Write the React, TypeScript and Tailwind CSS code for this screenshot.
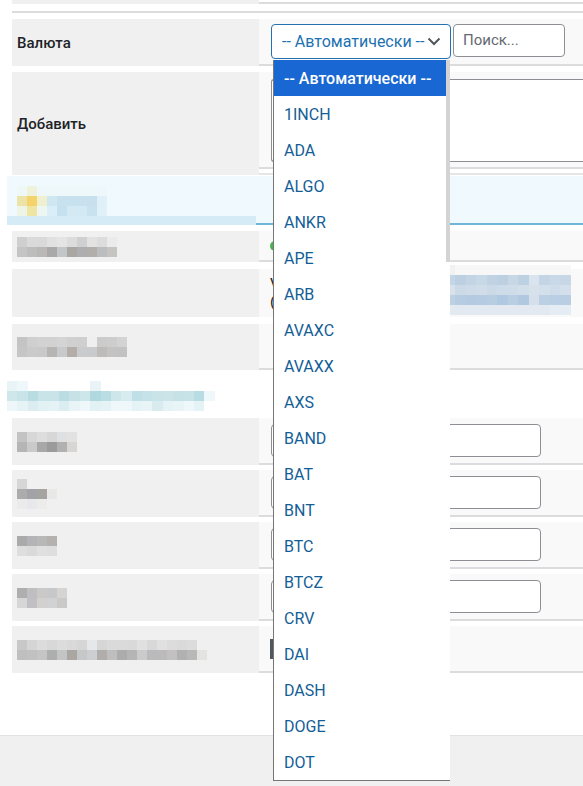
import React from "react";

const font = { fontFamily: "Roboto, 'Noto Sans', sans-serif" };

const coins = [
	"1INCH", "ADA", "ALGO", "ANKR", "APE", "ARB", "AVAXC", "AVAXX", "AXS", "BAND",
	"BAT", "BNT", "BTC", "BTCZ", "CRV", "DAI", "DASH", "DOGE", "DOT",
];

// pixelated (blurred) content, 10px cells
function Mosaic({ rows, cell = 10 }: { rows: string[][]; cell?: number }) {
	return (
		<div className="flex flex-col">
			{rows.map((r, i) => (
				<div key={i} className="flex">
					{r.map((c, j) => (
						<div key={j} style={{ width: cell, height: 10, background: c }} />
					))}
				</div>
			))}
		</div>
	);
}

function Row({
	h,
	left,
	right,
	className = "",
}: {
	h: number;
	left?: React.ReactNode;
	right?: React.ReactNode;
	className?: string;
}) {
	return (
		<div className={`flex ${className}`} style={{ height: h }}>
			<div className="w-[247px] shrink-0 bg-[#f0f0f0] flex items-center pl-[5px]">{left}</div>
			<div className="flex-1 bg-[#f9f9f9] border-b-2 border-[#dcdcde] flex items-center">{right}</div>
		</div>
	);
}

function TextInput() {
	return <div className="ml-[12px] w-[270px] h-[33px] bg-white border border-[#8c8f94] rounded-[4px]" />;
}

export default function App() {
	return (
		<div className="relative w-[583px] h-[786px] bg-white overflow-hidden" style={font}>
			<div className="pl-[12px]">
				{/* top of previous row */}
				<div className="flex h-[4px]">
					<div className="w-[247px] bg-[#f0f0f0]" />
					<div className="flex-1 border-b-2 border-[#dcdcde]" />
				</div>
				<div className="mt-[7px] h-[2px] bg-[#dcdcde]" />

				{/* Валюта */}
				<div className="mt-[6px] flex h-[47px]">
					<div className="w-[247px] shrink-0 bg-[#f0f0f0] flex items-center pl-[5px] pt-[2px] text-[15px] font-medium text-[#1d2327]">
						Валюта
					</div>
					<div className="flex-1 bg-[#f9f9f9] border-b-2 border-[#dcdcde] flex items-start pt-[5px]">
						<div className="ml-[12px] w-[180px] h-[35px] border border-[#2271b1] rounded-[4px] bg-white flex items-center pl-[10px] pr-[9px] justify-between">
							<span className="text-[16px] text-[#2271b1] leading-none">-- Автоматически --</span>
							<svg width="14" height="9" viewBox="0 0 14 9" fill="none">
								<path d="M1.5 1.5 L7 7 L12.5 1.5" stroke="#50575e" strokeWidth="2" />
							</svg>
						</div>
						<div className="ml-[2px] w-[112px] h-[33px] border border-[#8c8f94] rounded-[4px] bg-white flex items-center pl-[9px] text-[15px] text-[#646970]">
							Поиск...
						</div>
					</div>
				</div>

				{/* Добавить */}
				<div className="mt-[6px] flex items-start h-[103px]">
					<div className="w-[247px] h-[103px] shrink-0 bg-[#f0f0f0] flex items-center pl-[5px] pt-[2px] text-[15px] font-medium text-[#1d2327]">
						Добавить
					</div>
					<div className="flex-1">
						<div className="h-[97px] bg-[#f9f9f9] border-b-2 border-[#dcdcde] pt-[7px]">
							<div className="ml-[12px] h-[83px] bg-white border border-r-0 border-[#8c8f94] rounded-l-[3px]" />
						</div>
						<div className="mt-[4px] h-[2px] bg-[#e6e6e6]" />
					</div>
				</div>
			</div>

			{/* blurred section */}
			<div className="pl-[7px]">
				<div className="mt-[1px] h-[49px] bg-[#f0f9fe] border-b-2 border-[#6fb5d6] relative">
					<div className="pl-[10px] pt-[10px]">
						<Mosaic
							rows={[
								["#eef8f6", "#eef2da", "#eef8fb", "#eef8fb", "#eef8fb", "#eef8fb", "#eef8fb", "#eef8fb", "#eef8fb"],
								["#eee3a6", "#f4d46a", "#eef0cf", "#cfe7f1", "#c8e1ef", "#c7e1ef", "#c7e1ef", "#c8dfee", "#e0f0f8"],
								["#eef5e6", "#efe5a3", "#eef6f4", "#d9eef7", "#c5e1ef", "#d3eaf5", "#d3eaf5", "#c9e2ef", "#e0f0f8"],
							]}
						/>
					</div>
					<div className="absolute left-0 top-[40px] w-[249px] h-[9px] bg-[#d5ebf5]" />
				</div>

				<div className="pl-[5px]">
					<Row
						className="mt-[6px]"
						h={31}
						left={
							<Mosaic
								rows={[
									["#cfcfcf", "#dadada", "#d9d9d9", "#e1e1e1", "#e4e4e4", "#dcdcdc", "#cfd0d2", "#e3e2e0", "#dcdcdc", "#ebebeb"],
									["#c4c4c4", "#bdbdbe", "#b9b8b6", "#a9a9a9", "#c3c6c8", "#aaa6a2", "#aeadaf", "#b2aea9", "#bcbdbe", "#c6c4c2"],
								]}
							/>
						}
						right={<div className="ml-[11px] w-[10px] h-[10px] rounded-full bg-[#46b450]" />}
					/>
					<div className="mt-[7px] flex h-[48px]">
						<div className="w-[247px] shrink-0 bg-[#f0f0f0]" />
						<div className="flex-1 bg-[#f9f9f9] relative">
							<div className="pl-[11px] pt-[6px] text-[15px] leading-[18px] text-[#1d2327]">
								V<br />(
							</div>
							<div className="absolute left-[175px] top-[-4px]">
								<Mosaic
									cell={10.5}
									rows={[
										["#f7f7f7", "#f2f2f2", "#f7f7f7", "#f7f7f7", "#f7f7f7", "#f7f7f7", "#f7f7f7", "#f7f7f7", "#f7f7f7", "#f7f7f7", "#f7f7f7", "#f7f7f7", "#f7f7f7"],
										["#f7f7f7", "#c3d6e6", "#bcd0e2", "#c3d5e5", "#c7d9e7", "#c0d2e3", "#bdd0e2", "#c8d7e6", "#bdd1e3", "#dae4ee", "#c4d5e5", "#cad9e7", "#c7d7e6"],
										["#f7f7f7", "#d8e2ed", "#ccdae8", "#cedce9", "#d0dde9", "#ccdae7", "#cedbe8", "#cfdce9", "#d2deea", "#d7e1ec", "#d3dfeb", "#cfdce9", "#d3dfeb"],
										["#f7f7f7", "#bdd1e3", "#b6cce1", "#b3cae0", "#b5cbe1", "#b6cde2", "#b1c9e0", "#b9cee2", "#b0c8e0", "#d5e0ec", "#bcd0e3", "#bacfe3", "#b9cee2"],
										["#f7f7f7", "#e4eaf2", "#e2e9f1", "#e2e9f1", "#e2e9f1", "#e2e9f1", "#e2e9f1", "#e2e9f1", "#e2e9f1", "#e2e9f1", "#e2e9f1", "#e6ecf3", "#e6ecf3"],
									]}
								/>
							</div>
						</div>
					</div>
					<Row
						className="mt-[7px]"
						h={46}
						left={
							<Mosaic
								rows={[
									["#c4c4c4", "#cfcfcf", "#d2d2d2", "#d2d2d2", "#d4d4d4", "#d0d0d0", "#cfcfcf", "#efefef", "#cbcbcb", "#cdcdcd", "#d3d3d3"],
									["#c6c6c6", "#cacaca", "#c9c9c9", "#b7b5b3", "#c7c9cb", "#b3aeaa", "#cacbcd", "#c9cacc", "#bebcbb", "#c3c3c3", "#c2c2c2"],
								]}
							/>
						}
					/>
				</div>

				{/* blurred link */}
				<div className="mt-[8px] h-[40px] pt-[3px]">
					<Mosaic
						cell={10.4}
						rows={[
							["#e9f4f6", "#eef7f9", "#ffffff", "#ffffff", "#ffffff", "#ffffff", "#ffffff", "#ffffff", "#e9f4f6", "#ffffff", "#ffffff", "#ffffff", "#ffffff", "#ffffff", "#ffffff", "#ffffff", "#ffffff", "#ffffff", "#ffffff", "#ffffff"],
							["#cfe6ea", "#c9e4e8", "#b7dde3", "#c9e4e8", "#c9e4e8", "#b9dde3", "#c6e2e7", "#cde6ea", "#b0d9df", "#b9dde3", "#cde6ea", "#d7ecef", "#bfe0e6", "#c4e2e7", "#c9e4e8", "#cae4e8", "#c6e2e7", "#c7e3e8", "#b7dde3", "#eef7f9"],
							["#edf6f8", "#e6f3f6", "#dcedf2", "#e2f1f4", "#e6f3f6", "#dcedf2", "#e8f4f6", "#eef7f9", "#e2f1f4", "#e6f3f6", "#eef7f9", "#eef7f9", "#e6f3f6", "#e9f4f6", "#d8ecf0", "#e6f3f6", "#e9f4f6", "#eef7f9", "#e6f3f6", "#ffffff"],
						]}
					/>
				</div>

				<div className="pl-[5px] flex flex-col gap-[5px]">
					<Row
						h={47}
						left={
							<Mosaic
								rows={[
									["#c3c3c3", "#d7d7d7", "#dddddd", "#d7d7d7", "#dfe0e1", "#e2e2e2"],
									["#b5b5b5", "#cacaca", "#a8a8a8", "#9b9b9b", "#b1b1b1", "#d8d6d4"],
								]}
							/>
						}
						right={<TextInput />}
					/>
					<Row
						h={47}
						left={
							<Mosaic
								rows={[
									["#d6d6d6", "#f0f0f0", "#f0f0f0", "#f0f0f0"],
									["#acacac", "#a1a3a7", "#a5a4a1", "#e8e8e6"],
									["#ebebeb", "#e7e8ec", "#ececeb", "#f0f0f0"],
								]}
							/>
						}
						right={<TextInput />}
					/>
					<Row
						h={47}
						left={
							<Mosaic
								rows={[
									["#aaaaaa", "#b4b4b6", "#b8b8b8", "#b4b1af"],
									["#dedede", "#dadada", "#e0e0e0", "#dedede"],
								]}
							/>
						}
						right={<TextInput />}
					/>
					<Row
						h={47}
						left={
							<Mosaic
								rows={[
									["#aeaeae", "#bfbfc1", "#cbc9c8", "#c7c8ca", "#d6d4d3"],
									["#d6d6d6", "#c0c0c2", "#d3d1cf", "#d1d2d4", "#cbc9c7"],
								]}
							/>
						}
						right={<TextInput />}
					/>
					<Row
						h={47}
						left={
							<Mosaic
								rows={[
									["#c8c8c8", "#d5d5d5", "#dcdcdc", "#d8d8d8", "#dcdcdc", "#d9d9d9", "#d6d6d6", "#e6e7e9", "#d6d6d6", "#dadada", "#dadada", "#d9d9d9", "#e0e0e0", "#d8d8d8", "#e0e0e0", "#dcdcdc", "#dadada", "#dcdcdc", "#f0f0f0"],
									["#bfbfbf", "#c1c1c1", "#c5c5c5", "#aeaeae", "#c3c4c6", "#aaa6a2", "#c6c7c9", "#cdced2", "#b1adaa", "#bebebe", "#acacac", "#b5b5b5", "#cbcbcb", "#b8babc", "#bdbbba", "#c1c1c1", "#b1b1b1", "#b8b8b8", "#e3e3e1"],
								]}
							/>
						}
						right={<div className="ml-[11px] w-[3px] h-[20px] bg-[#50575e]" />}
					/>
				</div>
			</div>

			{/* footer */}
			<div className="absolute left-0 right-0 top-[735px] bottom-0 bg-[#f0f0f0] border-t border-[#e2e2e2]" />

			{/* open select list */}
			<div className="absolute left-[273px] top-[60px] w-[177px] h-[721px] bg-white border-l border-b border-[#767676] overflow-hidden">
				<div className="pr-[4px]">
					<div className="h-[36px] bg-[#1967d2] text-white font-medium text-[16px] flex items-center pl-[10px] pt-[2px]">
						-- Автоматически --
					</div>
					{coins.map((c) => (
						<div key={c} className="h-[36px] flex items-center pl-[10px] pt-[2px] text-[16px] text-[#135e96]">
							{c}
						</div>
					))}
				</div>
				<div className="absolute right-0 top-0 w-[4px] h-[202px] bg-[#d4d4d4]" />
			</div>
		</div>
	);
}
